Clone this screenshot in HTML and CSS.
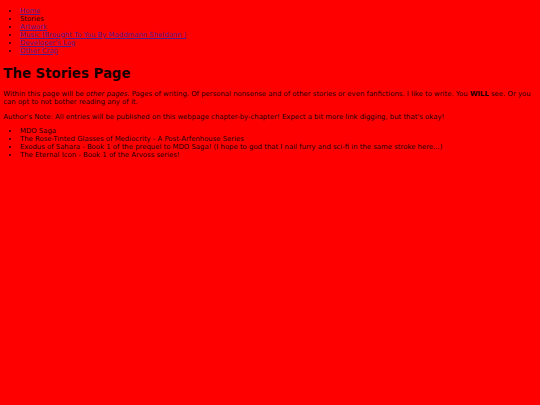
FILE: index.html
```html
<!DOCTYPE html>
<html>
<head>
<meta charset="utf-8">
<title>The Stories Page</title>
<link rel="stylesheet" href="styles.css">
</head>
<body class="page">
<ul class="nav">
<li><a href="#">Home</a></li>
<li>Stories</li>
<li><a href="#">Artwork</a></li>
<li><a href="#">Music (Brought To You By Maddmann Sheldonn  )</a></li>
<li><a href="#">Developer's Log</a></li>
<li><a href="#">Other Crap</a></li>
</ul>
<h1 class="title">The Stories Page</h1>
<p class="text">Within this page will be <em>other pages</em>. Pages of writing. Of personal nonsense and of other stories or even fanfictions. I like to write. You <strong>WILL</strong> see. Or you can opt to not bother reading any of it.</p>
<p class="text">Author's Note: All entries will be published on this webpage chapter-by-chapter! Expect a bit more link digging, but that's okay!</p>
<ul class="list">
<li>MDO Saga</li>
<li>The Rose-Tinted Glasses of Mediocrity - A Post-Arfenhouse Series</li>
<li>Exodus of Sahara - Book 1 of the prequel to MDO Saga! (I hope to god that I nail furry and sci-fi in the same stroke here...)</li>
<li>The Eternal Icon - Book 1 of the Arvoss series!</li>
</ul>
</body>
</html>
```
FILE: styles.css
```css
html { background: #ff0000; }
.page {
  margin: 3px 3.33px;
  background: #ff0000;
  color: #1a0000;
  font-family: "DejaVu Sans", Verdana, sans-serif;
  font-size: 6.9px;
  line-height: 8px;
}
.nav {
  margin: 3.5px 0 6.67px;
  padding-left: 16.67px;
}
.list {
  margin: 6.67px 0;
  padding-left: 16.67px;
}
.nav a { color: #551a8b; }
.title {
  font-size: 13.33px;
  line-height: 15.5px;
  margin: 11px 0 9px;
  font-weight: bold;
}
.text { margin: 6.67px 0; }
```
